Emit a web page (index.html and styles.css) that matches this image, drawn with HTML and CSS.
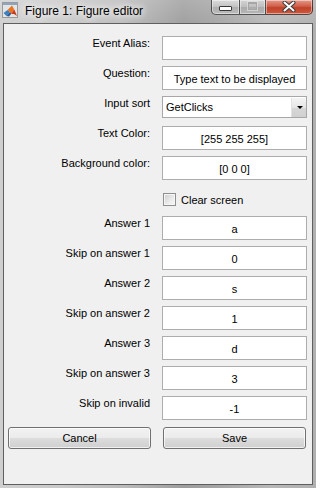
FILE: index.html
```html
<!DOCTYPE html>
<html>
<head>
<meta charset="utf-8">
<title>Figure 1: Figure editor</title>
<link rel="stylesheet" href="styles.css">
</head>
<body>
<div class="window">
  <div class="titlebar">
    <svg class="appicon" width="16" height="16" viewBox="0 0 16 16">
      <rect x="0.5" y="0.5" width="15" height="15" fill="#e4e4e4" stroke="#9a9a9a"/>
      <rect x="1" y="1" width="14" height="2" fill="#8aa6c4"/>
      <path d="M1.5 11 L5.5 8 L8 10 L4.5 14 Z" fill="#3d7fc0"/>
      <path d="M4.5 14 L8 10 L9.5 11.5 L7 14.5 Z" fill="#2a5d99"/>
      <path d="M5.5 8 L10 3.5 L12 7.5 L9.5 12 L8 10 Z" fill="#e8741f"/>
      <path d="M10 3.5 L12.5 8 L15 14 L12 12 L9.5 12 L12 7.5 Z" fill="#c8381b"/>
    </svg>
    <span class="title">Figure 1: Figure editor</span>
    <div class="controls">
      <div class="cbtn cmin"><span class="minglyph"></span></div>
      <div class="cbtn cmax"><span class="maxglyph"></span></div>
      <div class="cbtn cclose">
        <svg width="14" height="11" viewBox="0 0 14 11">
          <path d="M2.5 1.5 L11.5 9.5 M11.5 1.5 L2.5 9.5" stroke="#3b3b3b" stroke-width="4" stroke-linecap="round"/>
          <path d="M2.5 1.5 L11.5 9.5 M11.5 1.5 L2.5 9.5" stroke="#ffffff" stroke-width="2" stroke-linecap="round"/>
        </svg>
      </div>
    </div>
  </div>
  <div class="client">
    <div class="form">
      <div class="lbl">Event Alias:</div>
      <div class="edit"></div>

      <div class="lbl">Question:</div>
      <div class="edit">Type text to be displayed</div>

      <div class="lbl">Input sort</div>
      <div class="popup"><span class="popup-text">GetClicks</span><span class="popup-btn"><span class="tri"></span></span></div>

      <div class="lbl">Text Color:</div>
      <div class="edit">[255 255 255]</div>

      <div class="lbl">Background color:</div>
      <div class="edit">[0 0 0]</div>

      <div class="lbl"></div>
      <div class="check"><span class="box"></span><span>Clear screen</span></div>

      <div class="lbl">Answer 1</div>
      <div class="edit">a</div>

      <div class="lbl">Skip on answer 1</div>
      <div class="edit">0</div>

      <div class="lbl">Answer 2</div>
      <div class="edit">s</div>

      <div class="lbl">Skip on answer 2</div>
      <div class="edit">1</div>

      <div class="lbl">Answer 3</div>
      <div class="edit">d</div>

      <div class="lbl">Skip on answer 3</div>
      <div class="edit">3</div>

      <div class="lbl">Skip on invalid</div>
      <div class="edit">-1</div>
    </div>
    <div class="buttons">
      <div class="btn">Cancel</div>
      <div class="btn">Save</div>
    </div>
  </div>
</div>
</body>
</html>
```

FILE: styles.css
```css
html, body {
  margin: 0;
  padding: 0;
}

body {
  width: 316px;
  height: 488px;
  overflow: hidden;
  font-family: "Liberation Sans", Arial, sans-serif;
}

.window {
  width: 316px;
  height: 488px;
  box-sizing: border-box;
  background:
    linear-gradient(to bottom, rgba(255,255,255,0.18), rgba(255,255,255,0) 30px),
    linear-gradient(to right, #cfcfcf 0%, #c9c9c9 20%, #b9b9b9 40%, #9d9d9d 58%, #a4a4a4 68%, #b8b8b8 85%, #b0b0b0 100%);
  display: flex;
  flex-direction: column;
}

.titlebar {
  height: 23px;
  display: flex;
  align-items: flex-start;
  flex-shrink: 0;
}

.appicon {
  margin: 2px 0 0 2px;
  flex-shrink: 0;
}

.title {
  margin-left: 7px;
  padding-top: 3px;
  font-size: 12px;
  line-height: 16px;
  color: #000;
  text-shadow: 0 0 6px #fff, 0 0 10px #fff, 0 0 14px rgba(255,255,255,0.8);
  white-space: nowrap;
}

.controls {
  margin-left: auto;
  margin-right: 3px;
  display: flex;
  height: 15px;
}

.cbtn {
  box-sizing: border-box;
  height: 15px;
  border: 1px solid rgba(40,40,40,0.75);
  border-top: none;
  display: flex;
  justify-content: center;
  box-shadow: inset 0 0 0 1px rgba(255,255,255,0.45);
}

.cmin {
  width: 29px;
  border-radius: 0 0 0 5px;
  background: linear-gradient(#dcdcdc, #c2c2c2 50%, #aeaeae 51%, #bcbcbc);
}

.cmax {
  width: 26px;
  border-left: none;
  background: linear-gradient(#d4d4d4, #bdbdbd 50%, #acacac 51%, #b6b6b6);
}

.cclose {
  width: 47px;
  border-left: none;
  border-radius: 0 0 5px 0;
  background: linear-gradient(#e4988a, #cf5e48 45%, #c0412a 55%, #cd5a3e);
  padding-top: 1px;
}

.minglyph {
  margin-top: 6px;
  width: 11px;
  height: 3px;
  background: #fff;
  border: 1px solid #3a3a3a;
  border-radius: 1px;
}

.maxglyph {
  margin-top: 2px;
  width: 7px;
  height: 5px;
  border: 1px solid #a6a6a6;
  border-top-width: 2px;
  box-shadow: 0 0 0 1px rgba(230,230,230,0.6);
}

.client {
  margin: 0 3px;
  height: 462px;
  box-sizing: border-box;
  border: 1px solid #5f5f5f;
  background: #f0f0f0;
  font-size: 11px;
  line-height: 13px;
  color: #000;
}

.form {
  padding-top: 12px;
  display: grid;
  grid-template-columns: 146px 145px;
  grid-auto-rows: 24px;
  column-gap: 12px;
  row-gap: 6px;
}

.lbl {
  text-align: right;
  padding-top: 1px;
  white-space: nowrap;
}

.edit {
  box-sizing: border-box;
  height: 24px;
  background: #fff;
  border: 1px solid #adadad;
  padding-top: 6px;
  text-align: center;
  white-space: nowrap;
}

.popup {
  box-sizing: border-box;
  height: 22px;
  background: #fff;
  border: 1px solid #a7a7a7;
  display: flex;
}

.popup-text {
  flex: 1;
  padding: 4px 0 0 3px;
}

.popup-btn {
  width: 15px;
  margin: 1px 0 0 0;
  box-sizing: border-box;
  border-left: 1px solid #e2e2e2;
  background: linear-gradient(#f4f4f4, #e6e6e6 50%, #d6d6d6 51%, #d0d0d0);
  display: flex;
  justify-content: center;
  align-items: center;
}

.tri {
  width: 0;
  height: 0;
  border-left: 3px solid transparent;
  border-right: 3px solid transparent;
  border-top: 3px solid #000;
  margin-left: 1px;
}

.check {
  display: flex;
  align-items: flex-start;
  gap: 5px;
  padding: 7px 0 0 1px;
}

.check span:last-child {
  padding-top: 1px;
}

.box {
  width: 13px;
  height: 13px;
  box-sizing: border-box;
  border: 1px solid #8e8f8f;
  box-shadow: inset 0 0 0 1px #f6f6f6;
  background: linear-gradient(135deg, #cdcdcd, #ececec 60%, #f7f7f7);
  flex-shrink: 0;
}

.buttons {
  display: flex;
  gap: 12px;
  padding: 7px 0 0 4px;
}

.btn {
  box-sizing: border-box;
  width: 143px;
  height: 22px;
  border: 1px solid #707070;
  border-radius: 3px;
  background: linear-gradient(#f2f2f2 0%, #ebebeb 50%, #dddddd 51%, #cfcfcf 100%);
  box-shadow: inset 0 0 0 1px rgba(255,255,255,0.7);
  text-align: center;
  padding-top: 3px;
  line-height: 15px;
}
```
